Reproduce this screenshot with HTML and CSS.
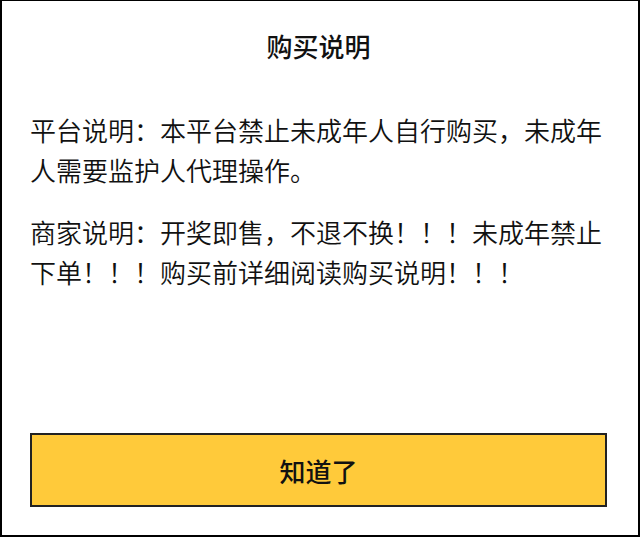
FILE: index.html
```html
<!DOCTYPE html>
<html lang="zh-CN">
<head>
<meta charset="utf-8">
<title>购买说明</title>
<link rel="stylesheet" href="styles.css">
</head>
<body>
<div class="dialog">
  <h1 class="title">购买说明</h1>
  <div class="content">
    <p class="para">平台说明：本平台禁止未成年人自行购买，未成年人需要监护人代理操作。</p>
    <p class="para">商家说明：开奖即售，不退不换！！！未成年禁止下单！！！购买前详细阅读购买说明！！！</p>
  </div>
  <button class="ok-btn" type="button">知道了</button>
</div>
</body>
</html>
```
FILE: styles.css
```css
html, body {
  margin: 0;
  padding: 0;
  background: #fff;
}
body {
  font-family: "Noto Sans CJK SC", "Noto Sans", sans-serif;
  color: #111;
}
.dialog {
  box-sizing: border-box;
  width: 640px;
  height: 537px;
  border: 2px solid #000;
  border-top-width: 1px;
  padding: 25px 31px 28px 28px;
  display: flex;
  flex-direction: column;
  background: #fff;
}
.title {
  margin: 0;
  font-size: 26px;
  line-height: 40px;
  font-weight: 500;
  text-align: center;
  color: #111;
}
.content {
  margin-top: 44px;
}
.para {
  margin: 0 0 22px 0;
  font-size: 26px;
  line-height: 40px;
  font-weight: 350;
}
.ok-btn {
  margin-top: auto;
  box-sizing: border-box;
  width: 100%;
  height: 74px;
  border: 2px solid #222;
  background: #ffca3a;
  font-family: inherit;
  font-size: 26px;
  font-weight: 500;
  color: #111;
  padding: 0;
}
```
